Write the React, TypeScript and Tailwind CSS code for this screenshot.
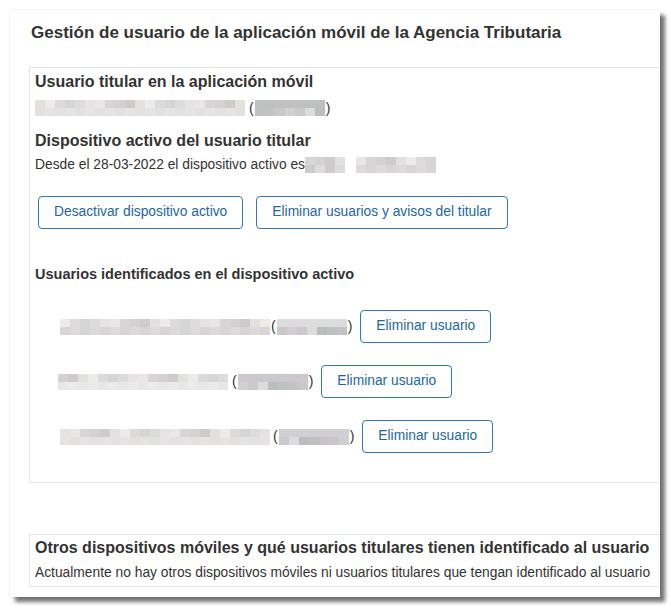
const light = [
  "bg-[#dddadb]",
  "bg-[#e5e3e4]",
  "bg-[#d3d1d2]",
  "bg-[#ecebeb]",
  "bg-[#dcdcdc]",
  "bg-[#d7d5d8]",
  "bg-[#e2e1de]",
  "bg-[#d4d6d6]",
  "bg-[#e8e6e7]",
  "bg-[#cdcbcc]",
];

const dark = [
  "bg-[#c4c2c4]",
  "bg-[#ccc9cd]",
  "bg-[#bfc1c0]",
  "bg-[#d2cfd2]",
  "bg-[#b9bdbd]",
  "bg-[#c9c7c7]",
  "bg-[#dddcdc]",
];

function Blur({ cols, seed, tone = "light" }: { cols: number; seed: number; tone?: "light" | "dark" }) {
  const pal = tone === "light" ? light : dark;
  return (
    <span className="inline-flex">
      {Array.from({ length: cols }).map((_, i) => (
        <span key={i} className="flex flex-col">
          <span className={`w-[10px] h-[8px] ${pal[(i * 7 + seed * 3) % pal.length]}`} />
          <span className={`w-[10px] h-[8px] ${pal[(i * 5 + seed * 11 + 4) % pal.length]}`} />
        </span>
      ))}
    </span>
  );
}

function Paren({ cols, seed }: { cols: number; seed: number }) {
  return (
    <span className="inline-flex items-center gap-[1px] text-[14px] text-[#333]">
      <span>(</span>
      <Blur cols={cols} seed={seed} tone="dark" />
      <span>)</span>
    </span>
  );
}

function Btn({ children }: { children: React.ReactNode }) {
  return (
    <button className="h-[33px] px-[15px] rounded-[4px] border border-[#2e78c0] bg-white text-[13.8px] text-[#2365a8]">
      {children}
    </button>
  );
}

const users = [
  { name: 21, paren: 7, seed: 1, indent: "ml-[25px]", gap: "ml-[1px]" },
  { name: 17, paren: 7, seed: 4, indent: "ml-[23px]", gap: "ml-[4px]" },
  { name: 21, paren: 7, seed: 7, indent: "ml-[25px]", gap: "ml-[3px]" },
];

export default function App() {
  return (
    <div className="min-h-screen bg-white pt-[10px] pl-[10px] font-['Liberation_Sans',Arial,sans-serif] text-[#333]">
      <div className="w-[650px] h-[587px] overflow-hidden bg-white shadow-[0_0_2px_rgba(0,0,0,0.12),5px_5px_4px_rgba(0,0,0,0.55)] pt-[11px] pl-[19px]">
        <h1 className="pl-[2px] text-[17px] leading-[24px] font-bold">
          Gestión de usuario de la aplicación móvil de la Agencia Tributaria
        </h1>

        <section className="mt-[22px] -mr-4 border border-[#dfe6ee] pl-[5px] pt-[4px] pb-[29px]">
          <h2 className="text-[16px] leading-[20px] font-bold">Usuario titular en la aplicación móvil</h2>
          <div className="mt-[6px] h-[20px] flex items-center gap-[4px]">
            <Blur cols={21} seed={2} />
            <Paren cols={7} seed={3} />
          </div>

          <h2 className="mt-[13px] text-[16px] leading-[20px] font-bold">Dispositivo activo del usuario titular</h2>
          <div className="mt-[4px] h-[20px] flex items-center text-[13.8px]">
            <span>Desde el 28-03-2022 el dispositivo activo es</span>
            <Blur cols={4} seed={5} />
            <span className="w-[11px]" />
            <Blur cols={8} seed={6} />
          </div>

          <div className="mt-[21px] ml-[3px] flex gap-[13px]">
            <Btn>Desactivar dispositivo activo</Btn>
            <Btn>Eliminar usuarios y avisos del titular</Btn>
          </div>

          <h3 className="mt-[35px] text-[14.5px] leading-[20px] font-bold">
            Usuarios identificados en el dispositivo activo
          </h3>

          <div className="mt-[26px] flex flex-col gap-[22px]">
            {users.map((u) => (
              <div key={u.seed} className={`flex items-center ${u.indent}`}>
                <Blur cols={u.name} seed={u.seed} />
                <span className={u.gap} />
                <Paren cols={u.paren} seed={u.seed + 1} />
                <span className="w-[8px]" />
                <Btn>Eliminar usuario</Btn>
              </div>
            ))}
          </div>
        </section>

        <section className="mt-[51px] -mr-4 border border-[#dfe6ee] pl-[5px] pt-[3px] pb-[3px]">
          <h2 className="text-[16px] leading-[20px] font-bold whitespace-nowrap">
            Otros dispositivos móviles y qué usuarios titulares tienen identificado al usuario
          </h2>
          <p className="mt-[5px] text-[13.8px] leading-[20px] whitespace-nowrap">
            Actualmente no hay otros dispositivos móviles ni usuarios titulares que tengan identificado al usuario
          </p>
        </section>
      </div>
    </div>
  );
}
